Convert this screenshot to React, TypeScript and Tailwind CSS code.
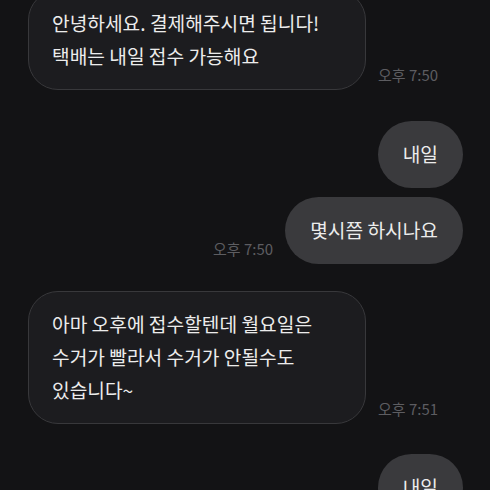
import React from "react";

const font = { fontFamily: '"Noto Sans CJK KR", "Noto Sans", sans-serif' };

function Received({ text, time, className = "" }: { text: React.ReactNode; time: string; className?: string }) {
  return (
    <div className={`flex items-end gap-[12px] pl-[28px] ${className}`}>
      <div className="w-[338px] shrink-0 rounded-[30px] border border-[#38383b] bg-[#1c1c1f] px-[23px] py-[16px] text-[19.2px] leading-[33px] text-[#ececec] break-keep">
        {text}
      </div>
      <div className="mb-[5px] text-[15px] leading-[20px] text-[#5d5d61] whitespace-nowrap">{time}</div>
    </div>
  );
}

function Sent({ text, time, className = "" }: { text: string; time?: string; className?: string }) {
  return (
    <div className={`flex items-end justify-end gap-[12px] pr-[27px] ${className}`}>
      {time && <div className="mb-[5px] text-[15px] leading-[20px] text-[#5d5d61] whitespace-nowrap">{time}</div>}
      <div className="shrink-0 rounded-full bg-[#3a3a3d] px-[25px] py-[17px] text-[19.2px] leading-[33px] text-[#ececec] whitespace-nowrap">
        {text}
      </div>
    </div>
  );
}

export default function App() {
  return (
    <div className="h-[490px] w-[490px] overflow-hidden bg-[#131315]" style={font}>
      <div className="mt-[-10px] flex flex-col">
        <Received text="안녕하세요. 결제해주시면 됩니다! 택배는 내일 접수 가능해요" time="오후 7:50" />
        <Sent text="내일" className="mt-[31px]" />
        <Sent text="몇시쯤 하시나요" time="오후 7:50" className="mt-[9px]" />
        <Received
          text="아마 오후에 접수할텐데 월요일은 수거가 빨라서 수거가 안될수도 있습니다~"
          time="오후 7:51"
          className="mt-[27px]"
        />
        <Sent text="내일" className="mt-[30px]" />
      </div>
    </div>
  );
}
